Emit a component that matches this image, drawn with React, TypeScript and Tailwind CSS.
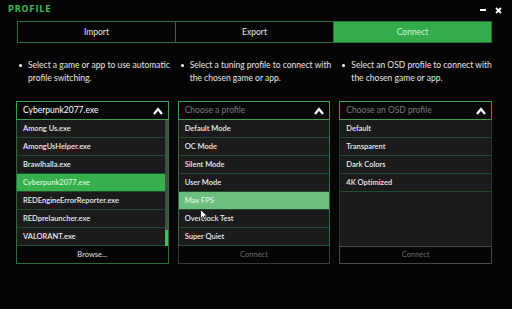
import React from 'react';

const games = [
  'Among Us.exe',
  'AmongUsHelper.exe',
  'Brawlhalla.exe',
  'Cyberpunk2077.exe',
  'REDEngineErrorReporter.exe',
  'REDprelauncher.exe',
  'VALORANT.exe',
];

const tuning = ['Default Mode', 'OC Mode', 'Silent Mode', 'User Mode', 'Max FPS', 'Overclock Test', 'Super Quiet'];

const osd = ['Default', 'Transparent', 'Dark Colors', '4K Optimized'];

const Chevron: React.FC = () => (
  <svg width="10" height="8" viewBox="0 0 10 8" className="shrink-0">
    <path d="M1 7 L5 2 L9 7" fill="none" stroke="#fff" strokeWidth="2.2" />
  </svg>
);

const Bullet: React.FC<{ children: React.ReactNode }> = ({ children }) => (
  <div className="flex gap-[6px] whitespace-nowrap text-[8.5px] leading-[13px] text-[#e6e6e6]">
    <span className="mt-[5px] h-[3px] w-[3px] shrink-0 rounded-full bg-white" />
    <span>{children}</span>
  </div>
);

const Row: React.FC<{ label: string; tone?: 'sel' | 'hover' }> = ({ label, tone }) => {
  const bg = tone === 'sel' ? 'bg-[#36b04c] text-[#d8f5dc]' : tone === 'hover' ? 'bg-[#6cbf7e] text-[#e0f5e4]' : 'bg-[#1b1b1b] text-[#ececec]';
  return (
    <div className={`flex h-[18px] items-center border-b border-[#1f4c2d] pl-[6px] text-[7.5px] font-semibold ${bg}`}>
      {label}
    </div>
  );
};

export default function App() {
  return (
    <div
      className="h-[309px] w-[512px] overflow-hidden bg-[#050505]"
      style={{ fontFamily: 'Lato, "Noto Sans", sans-serif' }}
    >
      <div className="flex h-[20px] items-center justify-between pl-[8px] pr-[10px]">
        <span
          className="text-[8px] font-bold tracking-[0.8px] text-[#3cb35a]"
          style={{ fontFamily: '"DejaVu Sans", sans-serif' }}
        >
          PROFILE
        </span>
        <div className="flex items-center gap-[9px]">
          <span className="h-[2px] w-[6px] bg-white" />
          <svg width="7" height="7" viewBox="0 0 7 7">
            <path d="M1 1 L6 6 M6 1 L1 6" stroke="#fff" strokeWidth="1.8" />
          </svg>
        </div>
      </div>

      <div className="ml-[17px] mt-[1px] flex h-[22px] w-[475px]">
        <div className="flex flex-1 items-center justify-center border border-[#2c6a3f] text-[8.5px] text-[#e8e8e8]">Import</div>
        <div className="flex flex-1 items-center justify-center border border-l-0 border-[#2c6a3f] text-[8.5px] text-[#e8e8e8]">Export</div>
        <div className="flex flex-1 items-center justify-center border border-l-0 border-[#2c6a3f] bg-[#33ad4b] text-[8.5px] text-[#d6f3da]">Connect</div>
      </div>

      <div className="ml-[16px] mt-[16px] grid w-[476px] grid-cols-3 gap-x-[9px]">
        <div className="pl-[3px]">
          <Bullet>
            Select a game or app to use automatic
            <br />
            profile switching.
          </Bullet>
        </div>
        <div className="pl-[3px]">
          <Bullet>
            Select a tuning profile to connect with
            <br />
            the chosen game or app.
          </Bullet>
        </div>
        <div className="pl-[3px]">
          <Bullet>
            Select an OSD profile to connect with
            <br />
            the chosen game or app.
          </Bullet>
        </div>
      </div>

      <div className="ml-[16px] mt-[16px] grid w-[476px] grid-cols-3 gap-x-[9px]">
        {/* games */}
        <div className="flex flex-col">
          <div className="flex h-[19px] items-center justify-between border border-[#37a04f] bg-[#080808] pl-[6px] pr-[5px] text-[8.5px] text-white">
            <span>Cyberpunk2077.exe</span>
            <Chevron />
          </div>
          <div className="flex border-x border-[#2c6a3f]">
            <div className="flex-1">
              {games.map((g) => (
                <Row key={g} label={g} tone={g === 'Cyberpunk2077.exe' ? 'sel' : undefined} />
              ))}
            </div>
            <div className="flex w-[3px] flex-col bg-[#4a4a4a]">
              <div className="flex-1" />
              <div className="h-[16px] bg-[#3cc45a]" />
            </div>
          </div>
          <div className="flex h-[18px] items-center justify-center border border-t-0 border-[#2c6a3f] bg-[#050505] text-[7.5px] text-[#e0e0e0]">
            Browse...
          </div>
        </div>

        {/* tuning */}
        <div className="relative flex flex-col">
          <div className="flex h-[19px] items-center justify-between border border-[#37a04f] bg-[#080808] pl-[6px] pr-[5px] text-[8.5px] text-[#7a7a7a]">
            <span>Choose a profile</span>
            <Chevron />
          </div>
          <div className="border-x border-[#2c6a3f]">
            {tuning.map((t) => (
              <Row key={t} label={t} tone={t === 'Max FPS' ? 'hover' : undefined} />
            ))}
          </div>
          <div className="flex h-[18px] items-center justify-center border border-t-0 border-[#3a3a3a] bg-[#050505] text-[7.5px] text-[#6a6a6a]">
            Connect
          </div>
          <svg className="absolute left-[22px] top-[108px]" width="8" height="12" viewBox="0 0 8 12">
            <path d="M0.5 0.5 L0.5 9.5 L2.8 7.5 L4.3 11 L5.6 10.4 L4.2 7 L7.2 7 Z" fill="#fff" stroke="#000" strokeWidth="0.7" />
          </svg>
        </div>

        {/* osd */}
        <div className="flex flex-col">
          <div className="flex h-[19px] items-center justify-between border border-[#37a04f] bg-[#080808] pl-[6px] pr-[5px] text-[8.5px] text-[#7a7a7a]">
            <span>Choose an OSD profile</span>
            <Chevron />
          </div>
          <div className="flex h-[126px] flex-col border-x border-[#1f3a28] bg-[#1b1b1b]">
            {osd.map((o) => (
              <Row key={o} label={o} />
            ))}
          </div>
          <div className="flex h-[18px] items-center justify-center border border-[#4a4a4a] bg-[#050505] text-[7.5px] text-[#6a6a6a]">
            Connect
          </div>
        </div>
      </div>
    </div>
  );
}
